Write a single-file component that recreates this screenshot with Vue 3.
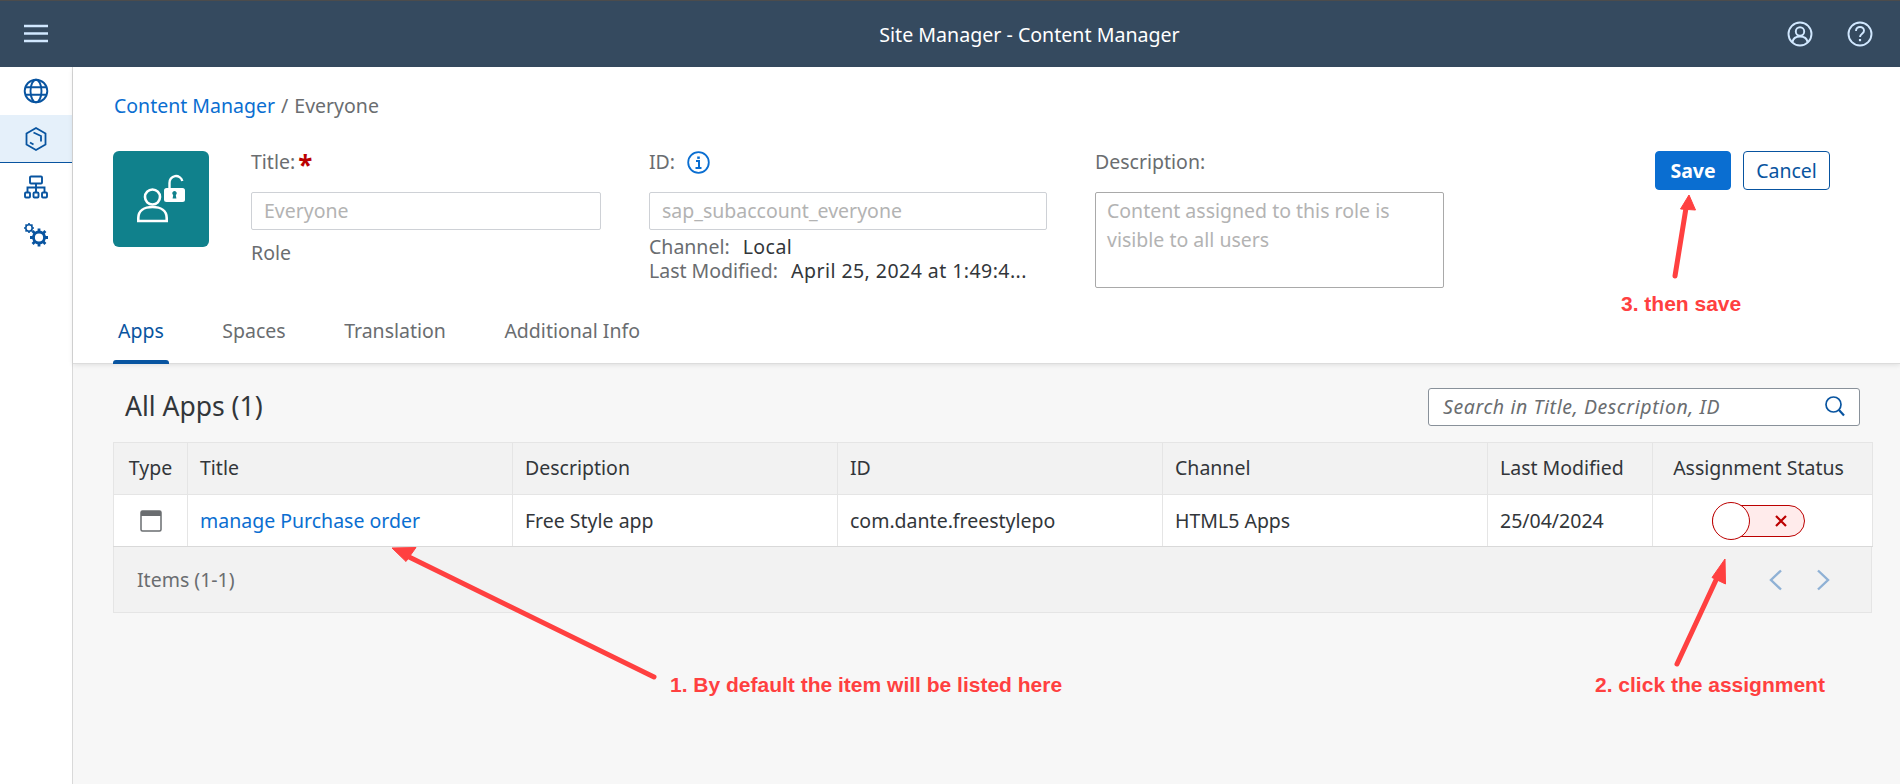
<template>
  <div class="app">
    <header class="topbar">
      <svg class="menu-icon" width="24" height="20" viewBox="0 0 24 20">
        <path d="M0 2h24M0 9.500h24M0 17h24" stroke="#d1e8ff" stroke-width="2.400" fill="none" />
      </svg>
      <div class="topbar-title">Site Manager - Content Manager</div>
      <svg class="top-icon" width="26" height="26" viewBox="0 0 26 26" fill="none" stroke="#d1e8ff" stroke-width="1.900">
        <circle cx="13" cy="13" r="11.500" />
        <circle cx="13" cy="10.500" r="4.200" />
        <path d="M5.500 21c.6-3.800 3.600-5.500 7.500-5.500s6.900 1.700 7.500 5.500" />
      </svg>
      <svg class="top-icon" width="26" height="26" viewBox="0 0 26 26" fill="none" stroke="#d1e8ff" stroke-width="1.900">
        <circle cx="13" cy="13" r="11.500" />
        <path d="M9 10c0-2.500 1.800-4 4-4s4 1.500 4 3.700c0 3-4 3-4 6.300" />
        <path d="M13 18v2.200" stroke-width="2.200" />
      </svg>
    </header>

    <div class="body">
      <nav class="sidenav">
        <div class="nav-item">
          <svg width="26" height="26" viewBox="0 0 26 26" fill="none" stroke="#0854a0" stroke-width="1.900">
            <circle cx="13" cy="13" r="11.300" />
            <ellipse cx="13" cy="13" rx="5.500" ry="11.300" />
            <path d="M2 9.200h22M2 16.800h22" />
          </svg>
        </div>
        <div class="nav-item selected">
          <svg width="24" height="26" viewBox="0 0 24 26" fill="none" stroke="#0854a0" stroke-width="1.800">
            <path d="M12 2l9.500 5.500v11L12 24l-9.500-5.500v-11z" />
            <path d="M9.500 6.500L17 10v5.500" />
            <path d="M6 16.500l3.500 2" />
          </svg>
        </div>
        <div class="nav-item">
          <svg width="24" height="24" viewBox="0 0 24 24" fill="none" stroke="#0854a0" stroke-width="1.900">
            <rect x="6" y="1.500" width="12" height="7" rx="1" />
            <path d="M12 8.500v4M3.500 17v-4.500h17V17M12 12.500V17" />
            <rect x="1" y="17.500" width="5" height="5" rx="1" />
            <rect x="9.500" y="17.500" width="5" height="5" rx="1" />
            <rect x="18" y="17.500" width="5" height="5" rx="1" />
          </svg>
        </div>
        <div class="nav-item">
          <svg width="26" height="26" viewBox="0 0 26 26" fill="none" stroke="#0854a0">
            <circle cx="6" cy="6" r="3.200" stroke-width="1.600" />
            <path d="M6 1v1.500M6 9.500V11M1 6h1.500M9.500 6H11M2.500 2.500l1 1M8.500 8.500l1 1M9.500 2.500l-1 1M3.500 8.500l-1 1" stroke-width="1.600" />
            <circle cx="16" cy="15.500" r="5.500" stroke-width="2.800" />
            <path d="M16 6.500v3M16 21.500v3M7 15.500h3M22 15.500h3M9.600 9.100l2.100 2.100M20.300 19.800l2.100 2.100M22.400 9.100l-2.100 2.100M11.700 19.800l-2.100 2.100" stroke-width="2.800" />
          </svg>
        </div>
      </nav>

      <main class="main">
        <section class="page-head">
          <div class="breadcrumb">
            <a class="crumb-link">Content Manager</a>
            <span class="crumb-sep">/</span>
            <span>Everyone</span>
          </div>

          <div class="head-row">
            <div class="tile">
              <svg width="96" height="96" viewBox="0 0 96 96" fill="none" stroke="#fff" stroke-width="2.600">
                <circle cx="39.500" cy="46" r="7.500" />
                <path d="M25.300 70v-3c0-7.500 6-11 14.200-11s14.200 3.500 14.200 11v3z" />
                <path d="M56.500 37v-5a6.500 6.500 0 0 1 12.800-2" stroke-width="2.400" />
                <rect x="51" y="37" width="21" height="14" rx="2.500" fill="#fff" stroke="none" />
                <path d="M61.500 40a2.200 2.200 0 0 1 1.300 4l.6 3.500h-3.800l.6-3.500a2.200 2.200 0 0 1 1.300-4z" fill="#10818c" stroke="none" />
              </svg>
            </div>

            <div class="field field-title">
              <label class="field-label">Title:<span class="required">*</span></label>
              <div class="fake-input">Everyone</div>
              <div class="field-note">Role</div>
            </div>

            <div class="field field-id">
              <label class="field-label">
                ID:
                <svg class="info-icon" width="23" height="23" viewBox="0 0 23 23" fill="none" stroke="#0a6ed1" stroke-width="1.800">
                  <circle cx="11.500" cy="11.500" r="10.300" />
                  <path d="M9 10h3v7M8.500 17h6" stroke-width="2" />
                  <path d="M11.500 5.500v2.400" stroke-width="2.600" />
                </svg>
              </label>
              <div class="fake-input">sap_subaccount_everyone</div>
              <div class="meta">
                <div><span class="meta-key">Channel:</span><span class="meta-val">Local</span></div>
                <div><span class="meta-key">Last Modified:</span><span class="meta-val">April 25, 2024 at 1:49:4...</span></div>
              </div>
            </div>

            <div class="field field-desc">
              <label class="field-label">Description:</label>
              <div class="fake-textarea">Content assigned to this role is visible to all users</div>
            </div>

            <div class="actions">
              <button class="btn btn-save">Save</button>
              <button class="btn btn-cancel">Cancel</button>
            </div>
          </div>

          <div class="tabs">
            <div v-for="tab in tabs" :key="tab" class="tab" :class="{ active: tab === 'Apps' }">{{ tab }}</div>
          </div>
        </section>

        <section class="content">
          <div class="list-head">
            <h2 class="list-title">All Apps (1)</h2>
            <div class="search">
              <span>Search in Title, Description, ID</span>
              <svg width="20" height="21" viewBox="0 0 20 21" fill="none" stroke="#0854a0" stroke-width="1.700">
                <circle cx="8.500" cy="8.500" r="7.500" />
                <path d="M14 14l5 5.500" stroke-width="2.200" />
              </svg>
            </div>
          </div>

          <table class="apps">
            <colgroup>
              <col v-for="w in colWidths" :key="w.name" :style="{ width: w.px + 'px' }" />
            </colgroup>
            <thead>
              <tr>
                <th class="center">Type</th>
                <th>Title</th>
                <th>Description</th>
                <th>ID</th>
                <th>Channel</th>
                <th>Last Modified</th>
                <th class="center status">Assignment Status</th>
              </tr>
            </thead>
            <tbody>
              <tr>
                <td class="center">
                  <svg class="window-icon" width="22" height="22" viewBox="0 0 22 22">
                    <rect x="1" y="1" width="20" height="20" rx="1.500" fill="#fff" stroke="#6a6d70" stroke-width="1.500" />
                    <rect x="1" y="1" width="20" height="5" fill="#6a6d70" />
                  </svg>
                </td>
                <td><a class="app-link">manage Purchase order</a></td>
                <td>Free Style app</td>
                <td>com.dante.freestylepo</td>
                <td>HTML5 Apps</td>
                <td>25/04/2024</td>
                <td class="center status">
                  <div class="toggle">
                    <span class="knob"></span>
                    <svg width="12" height="12" viewBox="0 0 12 12">
                      <path d="M1 1l10 10M11 1L1 11" stroke="#bb0000" stroke-width="2.200" />
                    </svg>
                  </div>
                </td>
              </tr>
            </tbody>
          </table>

          <div class="table-foot">
            <span>Items (1-1)</span>
            <div class="pager">
              <svg width="14" height="22" viewBox="0 0 14 22" fill="none" stroke="#8fb1d5" stroke-width="2.400">
                <path d="M12 1.500L2 11l10 9.500" />
              </svg>
              <svg width="14" height="22" viewBox="0 0 14 22" fill="none" stroke="#8fb1d5" stroke-width="2.400">
                <path d="M2 1.500L12 11 2 20.500" />
              </svg>
            </div>
          </div>
        </section>
      </main>
    </div>

    <!-- red annotations drawn on top of the screenshot -->
    <svg class="marks" width="1900" height="784" viewBox="0 0 1900 784">
      <g fill="#ff4040" stroke="#ff4040">
        <path d="M654 677L405 555" stroke-width="5" stroke-linecap="round" fill="none" />
        <path d="M392 548l24-.5-10 14z" stroke-width="1" />
        <path d="M1677 664l39-84" stroke-width="5" stroke-linecap="round" fill="none" />
        <path d="M1725 559l.5 25-13.500-6.500z" stroke-width="1" />
        <path d="M1675 276l11-68" stroke-width="5" stroke-linecap="round" fill="none" />
        <path d="M1689 195l6.500 15-15-1z" stroke-width="1" />
      </g>
    </svg>
    <div class="note note-1">1. By default the item will be listed here</div>
    <div class="note note-2">2. click the assignment</div>
    <div class="note note-3">3. then save</div>
  </div>
</template>

<script setup>
const tabs = ['Apps', 'Spaces', 'Translation', 'Additional Info']

const colWidths = [
  { name: 'type', px: 74 },
  { name: 'title', px: 325 },
  { name: 'description', px: 325 },
  { name: 'id', px: 325 },
  { name: 'channel', px: 325 },
  { name: 'modified', px: 165 },
  { name: 'status', px: 220 }
]
</script>

<style>
html,
body {
  margin: 0;
  background: #f7f7f7;
}
</style>

<style scoped>
.app {
  position: relative;
  display: flex;
  flex-direction: column;
  width: 1900px;
  height: 784px;
  overflow: hidden;
  font-family: "Noto Sans", "Open Sans", Arial, sans-serif;
  font-size: 19.5px;
  color: #32363a;
  background: #f7f7f7;
}

.topbar {
  display: flex;
  align-items: center;
  flex: 0 0 67px;
  box-sizing: border-box;
  padding: 0 27px 0 24px;
  gap: 34px;
  background: #354a5f;
  border-top: 1px solid #4c4c4c;
  color: #fff;
}

.topbar-title {
  flex: 1;
  padding-left: 224px;
  font-size: 19.600px;
  text-align: center;
}

.body {
  display: flex;
  flex: 1;
  min-height: 0;
}

.sidenav {
  flex: 0 0 72px;
  background: #fff;
  border-right: 1px solid #d9d9d9;
}

.nav-item {
  display: flex;
  align-items: center;
  justify-content: center;
  height: 48px;
}

.nav-item.selected {
  box-sizing: border-box;
  background: #e5f0fa;
  border-bottom: 1px solid #0854a0;
}

.main {
  display: flex;
  flex-direction: column;
  flex: 1;
  min-width: 0;
}

.page-head {
  position: relative;
  box-sizing: border-box;
  height: 296px;
  padding: 26px 70px 0 40px;
  color: #6a6d70;
  background: #fff;
  box-shadow: 0 1px 0 #dcdcdc, 0 2px 5px rgba(0, 0, 0, 0.1);
}

.breadcrumb {
  height: 26px;
  margin-left: 1px;
  line-height: 26px;
}

.crumb-link,
.app-link {
  color: #0a6ed1;
}

.crumb-sep {
  margin: 0 6px;
}

.head-row {
  display: flex;
  height: 153px;
  margin-top: 32px;
}

.tile {
  display: flex;
  flex: 0 0 96px;
  height: 96px;
  background: #10818c;
  border-radius: 6px;
}

.field-label {
  display: flex;
  align-items: center;
  gap: 12px;
  height: 26px;
  margin-top: -2px;
  line-height: 26px;
}

.required {
  margin-left: -9px;
  padding-top: 6px;
  font-size: 26px;
  font-weight: 700;
  line-height: 18px;
  color: #bb0000;
}

.field-title {
  flex: 0 0 350px;
  margin-left: 42px;
}

.field-id {
  flex: 0 0 398px;
  margin-left: 48px;
}

.field-desc {
  flex: 0 0 349px;
  margin-left: 48px;
}

.fake-input {
  box-sizing: border-box;
  height: 38px;
  margin-top: 17px;
  padding: 0 12px;
  line-height: 36px;
  color: #b3b3b3;
  background: #fff;
  border: 1px solid #ced1d6;
  border-radius: 2px;
}

.fake-textarea {
  box-sizing: border-box;
  height: 96px;
  margin-top: 17px;
  padding: 4px 11px;
  line-height: 28.500px;
  color: #b3b3b3;
  background: #fff;
  border: 1px solid #a9a9a9;
  border-radius: 2px;
}

.field-note {
  margin-top: 10px;
  line-height: 26px;
}

.meta {
  margin-top: 5px;
  line-height: 24px;
}

.meta-key {
  margin-right: 13px;
}

.meta-val {
  letter-spacing: 0.45px;
  color: #32363a;
}

.actions {
  display: flex;
  gap: 12px;
  margin-left: auto;
}

.btn {
  box-sizing: border-box;
  height: 39px;
  font-family: inherit;
  font-size: 19.5px;
  border-radius: 4px;
}

.btn-save {
  width: 76px;
  font-weight: 700;
  color: #fff;
  background: #0a6ed1;
  border: 1px solid #0a6ed1;
}

.btn-cancel {
  width: 87px;
  color: #0854a0;
  background: #fff;
  border: 1px solid #0854a0;
}

.tabs {
  display: flex;
}

.tab {
  position: relative;
  height: 59px;
  margin-right: 48.500px;
  padding: 0 5px;
  line-height: 53px;
}

.tab.active {
  color: #0854a0;
}

.tab.active::after {
  content: "";
  position: absolute;
  left: 0;
  right: 0;
  bottom: -1px;
  height: 4px;
  background: #0854a0;
  border-radius: 3px 3px 0 0;
}

.content {
  flex: 1;
  padding: 25px 28px 0 40px;
}

.list-head {
  display: flex;
  align-items: center;
  justify-content: space-between;
  height: 37px;
  margin-bottom: 17px;
  padding: 0 12px;
}

.list-title {
  margin: -2px 0 0;
  font-size: 26.500px;
  font-weight: 400;
}

.search {
  display: flex;
  align-items: center;
  justify-content: space-between;
  box-sizing: border-box;
  width: 432px;
  height: 38px;
  padding: 0 14px;
  font-style: italic;
  letter-spacing: 0.6px;
  color: #6a6d70;
  background: #fff;
  border: 1px solid #89919a;
  border-radius: 3px;
}

.apps {
  width: 1759px;
  table-layout: fixed;
  border-collapse: collapse;
  background: #fff;
}

.apps th,
.apps td {
  box-sizing: border-box;
  height: 52px;
  padding: 0 12px;
  font-weight: 400;
  text-align: left;
  white-space: nowrap;
  border: 1px solid #e5e5e5;
}

.apps th {
  padding-bottom: 2px;
  background: #f2f2f2;
}

.apps td {
  border-bottom-color: #d9d9d9;
}

.apps .center {
  padding-right: 0;
  padding-left: 0;
  text-align: center;
}

.apps .status {
  padding-right: 8px;
}

.window-icon {
  display: block;
  margin: 0 auto;
}

.toggle {
  position: relative;
  display: flex;
  align-items: center;
  justify-content: flex-end;
  box-sizing: border-box;
  width: 93px;
  height: 32px;
  margin: 0 auto;
  padding-right: 17px;
  background: #ffebeb;
  border: 1px solid #bb0000;
  border-radius: 16px;
}

.knob {
  position: absolute;
  left: -1px;
  top: -4px;
  box-sizing: border-box;
  width: 38px;
  height: 38px;
  background: #fff;
  border: 1px solid #bb0000;
  border-radius: 50%;
}

.table-foot {
  display: flex;
  align-items: center;
  justify-content: space-between;
  box-sizing: border-box;
  width: 1759px;
  height: 66px;
  padding: 0 41px 0 23px;
  color: #6a6d70;
  background: #f2f2f2;
  border: 1px solid #e5e5e5;
  border-top: 0;
}

.pager {
  display: flex;
  gap: 33px;
}

.marks {
  position: absolute;
  left: 0;
  top: 0;
  pointer-events: none;
}

.note {
  position: absolute;
  font-family: "Liberation Sans", Arial, sans-serif;
  font-size: 21px;
  font-weight: 700;
  line-height: 24px;
  color: #ff4040;
  white-space: nowrap;
}

.note-1 {
  left: 670px;
  top: 673px;
}

.note-2 {
  left: 1595px;
  top: 673px;
}

.note-3 {
  left: 1621px;
  top: 292px;
}
</style>
